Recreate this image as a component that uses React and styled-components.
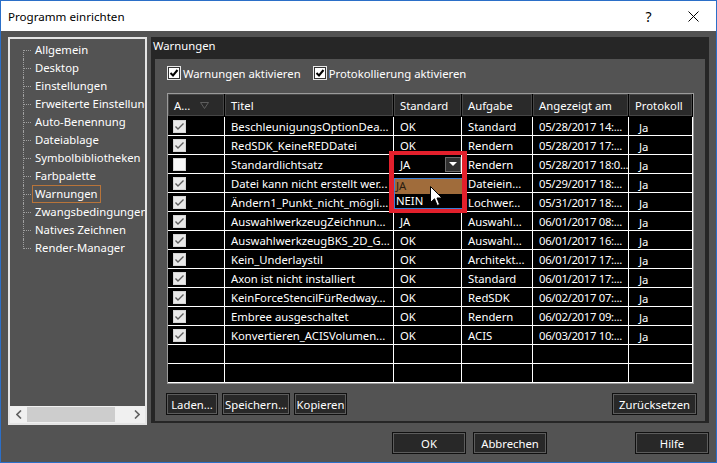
import React from 'react';
import styled, { createGlobalStyle } from 'styled-components';

const GlobalStyle = createGlobalStyle`
  html, body { margin: 0; padding: 0; background: #535353; }
  body { font-family: "Noto Sans", "Open Sans", sans-serif; font-size: 11.3px; }
  * { box-sizing: border-box; }
`;

const Window = styled.div`
  width: 717px;
  height: 463px;
  border: 1px solid #2b6fc8;
  background: #535353;
  display: flex;
  flex-direction: column;
  overflow: hidden;
`;

const TitleBar = styled.div`
  height: 30px;
  flex: none;
  background: #fff;
  color: #000;
  display: flex;
  align-items: center;
  padding-left: 7px;
  font-size: 11.6px;
`;

const Title = styled.span`
  flex: 1;
`;

const TitleButton = styled.div`
  width: 45px;
  height: 30px;
  display: flex;
  align-items: center;
  justify-content: center;
  font-size: 14px;
`;

const Body = styled.div`
  display: flex;
  align-items: flex-start;
  gap: 4px;
  padding: 6px 0 0 7px;
`;

/* left navigation tree */
const Tree = styled.div`
  width: 139px;
  height: 388px;
  flex: none;
  border: 2px solid #e4e4e4;
  background: #535353;
  display: flex;
  flex-direction: column;
`;

const TreeList = styled.ul`
  list-style: none;
  margin: 0;
  padding: 2px 0 0 22px;
  flex: 1;
  overflow: hidden;
`;

const TreeItem = styled.li`
  position: relative;
  height: 18px;
  display: flex;
  align-items: center;
  white-space: nowrap;
  &::before {
    content: '';
    position: absolute;
    left: -8px;
    top: 9px;
    width: 7px;
    border-top: 1px dotted #a0a0a0;
  }
  &::after {
    content: '';
    position: absolute;
    left: -9px;
    top: 0;
    height: 18px;
    border-left: 1px dotted #a0a0a0;
  }
  &:first-child::after { top: 9px; height: 9px; }
  &:last-child::after { height: 10px; }
`;

const TreeLabel = styled.span`
  padding: 0 2px;
  line-height: 16px;
  color: #fff;
  border: 1px solid ${p => (p.$selected ? '#b8743a' : 'transparent')};
`;

const HScroll = styled.div`
  height: 17px;
  flex: none;
  background: #f0f0f0;
  display: flex;
  align-items: center;
`;

const ScrollArrow = styled.div`
  width: 17px;
  height: 17px;
  display: flex;
  align-items: center;
  justify-content: center;
`;

const ScrollTrack = styled.div`
  flex: 1;
  height: 15px;
`;

const ScrollThumb = styled.div`
  width: 88px;
  height: 15px;
  background: #cdcdcd;
`;

/* right settings panel */
const Panel = styled.div`
  width: 558px;
  height: 386px;
  flex: none;
  background: #262626;
  display: flex;
  flex-direction: column;
`;

const PanelTitle = styled.div`
  height: 22px;
  line-height: 18px;
  padding-left: 2px;
  color: #fff;
`;

const PanelBody = styled.div`
  flex: 1;
  margin: 0 4px 2px;
  background: #535353;
  padding: 5px 11px 6px 12px;
  display: flex;
  flex-direction: column;
`;

const CheckRow = styled.div`
  height: 18px;
  display: flex;
  align-items: center;
  gap: 12px;
`;

const CheckLabel = styled.label`
  display: flex;
  align-items: center;
  gap: 2px;
  color: #fff;
`;

const cols = '57px 169px 68px 71px 96px 64px';

const TableWrap = styled.div`
  position: relative;
  margin-top: 11px;
  width: 527px;
  border: 1px solid #9b9b9b;
  background: #000;
`;

const HeaderRow = styled.div`
  display: grid;
  grid-template-columns: ${cols};
  height: 23px;
  background: #000;
`;

const HeaderCell = styled.div`
  display: flex;
  align-items: center;
  padding-left: 6px;
  color: #fff;
  background: #2a2a2a;
  box-shadow: inset 0 0 0 1px #464646;
  border-right: 1px solid #000;
  border-bottom: 1px solid #000;
  white-space: nowrap;
`;

const SortMark = styled.svg`
  margin-left: auto;
  margin-right: 15px;
`;

const DataRow = styled.div`
  display: grid;
  grid-template-columns: ${cols};
  height: 19px;
  border-bottom: 1px solid #fff;
`;

const DataCell = styled.div`
  display: flex;
  align-items: center;
  padding-left: ${p => p.$pad || 6}px;
  padding-top: ${p => p.$top || 0}px;
  letter-spacing: ${p => (p.$tight ? '-0.3px' : 'normal')};
  color: #fff;
  border-right: 1px solid #fff;
  white-space: nowrap;
  overflow: hidden;
`;

const ComboText = styled.span`
  flex: 1;
`;

const DropButton = styled.div`
  width: 16px;
  height: 15px;
  flex: none;
  background: #2f2f2f;
  border: 1px solid #6a6a6a;
  display: flex;
  align-items: center;
  justify-content: center;
`;

const Popup = styled.div`
  position: absolute;
  left: 226px;
  top: 80px;
  width: 69px;
  height: 36px;
  background: #000;
  padding-top: 4px;
`;

const PopupList = styled.div`
  border: 1px solid #3b7fd6;
  height: 31px;
`;

const PopupItem = styled.div`
  height: 14.5px;
  line-height: 14px;
  padding-left: 1px;
  color: ${p => (p.$active ? '#2a1d10' : '#fff')};
  background: ${p => (p.$active ? '#a06c3b' : '#000')};
`;

const Highlight = styled.div`
  position: absolute;
  left: 221px;
  top: 57px;
  width: 78px;
  height: 62px;
  border-style: solid;
  border-color: #e3202c;
  border-width: 4px 5px;
`;

const Cursor = styled.svg`
  position: absolute;
  left: 262px;
  top: 92px;
`;

const ButtonRow = styled.div`
  display: flex;
  gap: 4px;
  margin-top: 9px;
  margin-left: -1px;
  margin-right: -3px;
`;

const Button = styled.button`
  height: 22px;
  padding: 0 ${p => p.$pad || 4}px;
  width: ${p => (p.$w ? `${p.$w}px` : 'auto')};
  margin-left: ${p => p.$ml || '0'};
  font: inherit;
  color: #fff;
  background: #282828;
  border: 1px solid #101010;
  box-shadow: inset 0 0 0 1px #5c5c5c;
  display: flex;
  align-items: center;
  justify-content: center;
  white-space: nowrap;
`;

const Footer = styled.div`
  display: flex;
  justify-content: flex-end;
  gap: 7px;
  margin-top: 7px;
  padding-right: 7px;
`;

const treeItems = [
  'Allgemein', 'Desktop', 'Einstellungen', 'Erweiterte Einstellungen', 'Auto-Benennung',
  'Dateiablage', 'Symbolbibliotheken', 'Farbpalette', 'Warnungen', 'Zwangsbedingungen',
  'Natives Zeichnen', 'Render-Manager',
];

const rows = [
  [true, 'BeschleunigungsOptionDea...', 'OK', 'Standard', '05/28/2017 14:...'],
  [true, 'RedSDK_KeineREDDatei', 'OK', 'Rendern', '05/28/2017 17:...'],
  [false, 'Standardlichtsatz', 'COMBO', 'Rendern', '05/28/2017 18:0...'],
  [true, 'Datei kann nicht erstellt wer...', '', 'Dateiein...', '05/29/2017 18:...'],
  [true, 'Ändern1_Punkt_nicht_mögli...', '', 'Lochwer...', '05/31/2017 18:...'],
  [true, 'AuswahlwerkzeugZeichnun...', 'JA', 'Auswahl...', '06/01/2017 08:...'],
  [true, 'AuswahlwerkzeugBKS_2D_G...', 'OK', 'Auswahl...', '06/01/2017 16:...'],
  [true, 'Kein_Underlaystil', 'OK', 'Architekt...', '06/01/2017 17:...'],
  [true, 'Axon ist nicht installiert', 'OK', 'Standard', '06/01/2017 17:...'],
  [true, 'KeinForceStencilFürRedway...', 'OK', 'RedSDK', '06/02/2017 07:...'],
  [true, 'Embree ausgeschaltet', 'OK', 'Rendern', '06/02/2017 09:...'],
  [true, 'Konvertieren_ACISVolumen...', 'OK', 'ACIS', '06/03/2017 10:...'],
];

const GridCheck = ({ checked }) => (
  <svg width="13" height="13" viewBox="0 0 13 13">
    <rect x="0.5" y="0.5" width="12" height="12" fill={checked ? '#e9e9e9' : '#f7f7f7'} stroke="#d4d4d4" />
    {checked && <path d="M2.5 6.5 L5 9 L10.5 3.5" fill="none" stroke="#5c5c5c" strokeWidth="1.4" />}
  </svg>
);

const BoxCheck = () => (
  <svg width="14" height="14" viewBox="0 0 14 14">
    <rect x="0.5" y="0.5" width="13" height="13" fill="#fff" stroke="#e8e8e8" />
    <rect x="1.5" y="1.5" width="11" height="11" fill="#fff" stroke="#333" />
    <path d="M3.5 7 L6 9.5 L10.5 4" fill="none" stroke="#000" strokeWidth="2" />
  </svg>
);

const Chevron = ({ dir }) => (
  <svg width="6" height="9" viewBox="0 0 6 9">
    <path d={dir === 'left' ? 'M5 0.5 L1 4.5 L5 8.5' : 'M1 0.5 L5 4.5 L1 8.5'} fill="none" stroke="#606060" strokeWidth="1.6" />
  </svg>
);

export default function App() {
  return (
    <>
      <GlobalStyle />
      <Window>
        <TitleBar>
          <Title>Programm einrichten</Title>
          <TitleButton>?</TitleButton>
          <TitleButton>
            <svg width="11" height="11" viewBox="0 0 11 11">
              <path d="M0.5 0.5 L10.5 10.5 M10.5 0.5 L0.5 10.5" stroke="#000" strokeWidth="1" />
            </svg>
          </TitleButton>
        </TitleBar>

        <Body>
          <Tree>
            <TreeList>
              {treeItems.map(t => (
                <TreeItem key={t}>
                  <TreeLabel $selected={t === 'Warnungen'}>{t}</TreeLabel>
                </TreeItem>
              ))}
            </TreeList>
            <HScroll>
              <ScrollArrow><Chevron dir="left" /></ScrollArrow>
              <ScrollTrack><ScrollThumb /></ScrollTrack>
              <ScrollArrow><Chevron dir="right" /></ScrollArrow>
            </HScroll>
          </Tree>

          <Panel>
            <PanelTitle>Warnungen</PanelTitle>
            <PanelBody>
              <CheckRow>
                <CheckLabel><BoxCheck />Warnungen aktivieren</CheckLabel>
                <CheckLabel><BoxCheck />Protokollierung aktivieren</CheckLabel>
              </CheckRow>

              <TableWrap>
                <HeaderRow>
                  <HeaderCell>
                    A...
                    <SortMark width="9" height="7" viewBox="0 0 9 7">
                      <path d="M0.5 0.5 L8.5 0.5 L4.5 6.5 Z" fill="none" stroke="#5e5e5e" />
                    </SortMark>
                  </HeaderCell>
                  <HeaderCell>Titel</HeaderCell>
                  <HeaderCell>Standard</HeaderCell>
                  <HeaderCell>Aufgabe</HeaderCell>
                  <HeaderCell>Angezeigt am</HeaderCell>
                  <HeaderCell>Protokoll</HeaderCell>
                </HeaderRow>

                {rows.map(([checked, title, std, task, date], i) => (
                  <DataRow key={i}>
                    <DataCell $pad={5}><GridCheck checked={checked} /></DataCell>
                    <DataCell>{title}</DataCell>
                    <DataCell>
                      {std === 'COMBO' ? (
                        <>
                          <ComboText>JA</ComboText>
                          <DropButton>
                            <svg width="8" height="4" viewBox="0 0 8 4"><path d="M0 0 L8 0 L4 4 Z" fill="#fff" /></svg>
                          </DropButton>
                        </>
                      ) : std}
                    </DataCell>
                    <DataCell>{task}</DataCell>
                    <DataCell $tight>{date}</DataCell>
                    <DataCell $pad={10} $top={2}>Ja</DataCell>
                  </DataRow>
                ))}
                {[0, 1].map(i => (
                  <DataRow key={`e${i}`}>
                    <DataCell /><DataCell /><DataCell /><DataCell /><DataCell /><DataCell />
                  </DataRow>
                ))}

                <Popup>
                  <PopupList>
                    <PopupItem $active>JA</PopupItem>
                    <PopupItem>NEIN</PopupItem>
                  </PopupList>
                </Popup>
                <Highlight />
                <Cursor width="13" height="21" viewBox="0 0 13 21">
                  <path d="M0.5 0.5 L0.5 16.5 L4.5 12.8 L7.2 19.5 L9.6 18.5 L7 12 L12 12 Z" fill="#fff" stroke="#000" strokeWidth="1" />
                </Cursor>
              </TableWrap>

              <ButtonRow>
                <Button $w={52}>Laden...</Button>
                <Button $w={68}>Speichern...</Button>
                <Button $w={53}>Kopieren</Button>
                <Button $ml="auto" $w={85}>Zurücksetzen</Button>
              </ButtonRow>
            </PanelBody>
          </Panel>
        </Body>

        <Footer>
          <Button $w={74}>OK</Button>
          <Button $w={74}>Abbrechen</Button>
          <Button $w={74} $ml="81px">Hilfe</Button>
        </Footer>
      </Window>
    </>
  );
}
